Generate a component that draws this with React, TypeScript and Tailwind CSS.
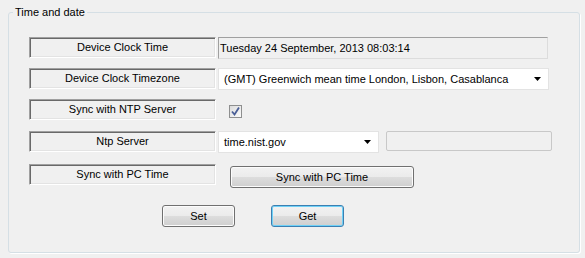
import React, { useState } from 'react';

const font = { fontFamily: '"Liberation Sans", Arial, sans-serif' };

const SunkenLabel: React.FC<{ text: string }> = ({ text }) => (
  <div className="w-[187px] h-[21px] shrink-0 self-start flex items-center justify-center border border-t-[#a0a0a0] border-l-[#a0a0a0] border-b-white border-r-white shadow-[inset_1px_1px_0_#696969,inset_-1px_-1px_0_#e3e3e3] text-[11px] text-black">
    {text}
  </div>
);

const Arrow: React.FC = () => (
  <svg width="8" height="4" viewBox="0 0 8 4" className="shrink-0">
    <path d="M0 0 H7 L3.5 4 Z" fill="#000" />
  </svg>
);

const Combo: React.FC<{ value: string; width: string }> = ({ value, width }) => (
  <div className={`${width} h-[22px] bg-white border border-[#e3e3e3] flex items-center justify-between pl-[5px] pr-[6px] text-[11px] text-black`}>
    <span>{value}</span>
    <Arrow />
  </div>
);

const WinButton: React.FC<{ label: string; width: string; focused?: boolean }> = ({ label, width, focused }) => (
  <button
    className={`${width} h-[22px] rounded-[3px] border text-[11px] text-black bg-[linear-gradient(#f2f2f2_0%,#ebebeb_50%,#dddddd_50%,#cfcfcf_100%)] ${
      focused ? 'border-[#3c7fb1] shadow-[inset_0_0_0_1px_#6fd1f7]' : 'border-[#707070] shadow-[inset_0_0_0_1px_#fcfcfc]'
    }`}
  >
    {label}
  </button>
);

const App: React.FC = () => {
  const [ntp, setNtp] = useState(true);

  return (
    <div className="w-[585px] h-[258px] bg-[#f0f0f0] overflow-hidden" style={font}>
      <fieldset className="ml-[8px] mt-[6px] w-[572px] h-[247px] border border-[#d5dfe5] rounded-[3px] p-0 shadow-[1px_1px_0_#ffffff]">
        <legend className="ml-[4px] px-[2px] text-[11px] leading-[13px] text-black">Time and date</legend>

        <div className="pl-[20px] pt-[18px] flex flex-col">
          {/* Device clock time */}
          <div className="flex gap-[2px] h-[22px]">
            <SunkenLabel text="Device Clock Time" />
            <div className="w-[330px] h-[22px] bg-[#f0f0f0] border border-[#dcdcdc] border-t-[#a0a0a0] border-l-[#a0a0a0] flex items-center pl-[1px] text-[11px] text-black">
              Tuesday 24 September, 2013 08:03:14
            </div>
          </div>

          {/* Timezone */}
          <div className="flex gap-[2px] h-[22px] mt-[9px]">
            <SunkenLabel text="Device Clock Timezone" />
            <Combo value="(GMT) Greenwich mean time London, Lisbon, Casablanca" width="w-[331px]" />
          </div>

          {/* NTP sync */}
          <div className="flex gap-[2px] h-[22px] mt-[9px]">
            <SunkenLabel text="Sync with NTP Server" />
            <div className="pl-[11px] pt-[6px]">
              <button
                onClick={() => setNtp(!ntp)}
                className="w-[13px] h-[13px] border border-[#8e8f8f] bg-[linear-gradient(135deg,#dcdcdc,#fbfbfb)] flex items-center justify-center"
              >
                {ntp && (
                  <svg width="9" height="9" viewBox="0 0 9 9">
                    <path d="M1 4.5 L3.5 7.5 L8 0.5" fill="none" stroke="#4a5f97" strokeWidth="1.8" />
                  </svg>
                )}
              </button>
            </div>
          </div>

          {/* NTP server */}
          <div className="flex gap-[2px] h-[22px] mt-[10px]">
            <SunkenLabel text="Ntp Server" />
            <Combo value="time.nist.gov" width="w-[161px]" />
            <div className="ml-[5px] w-[166px] h-[20px] bg-[#f0f0f0] border border-[#c8c8c8] rounded-[2px]" />
          </div>

          {/* Sync PC */}
          <div className="flex h-[22px] mt-[11px]">
            <SunkenLabel text="Sync with PC Time" />
            <div className="ml-[14px]">
              <WinButton label="Sync with PC Time" width="w-[184px]" />
            </div>
          </div>

          {/* Actions */}
          <div className="flex gap-[36px] mt-[19px] pl-[133px]">
            <WinButton label="Set" width="w-[73px]" />
            <WinButton label="Get" width="w-[73px]" focused />
          </div>
        </div>
      </fieldset>
    </div>
  );
};

export default App;
